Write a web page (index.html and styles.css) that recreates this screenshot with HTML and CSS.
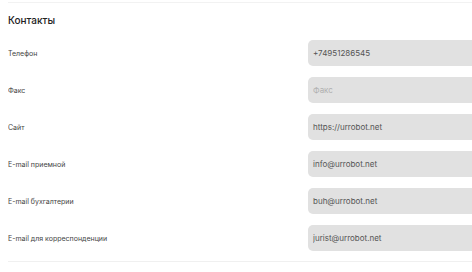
FILE: index.html
```html
<!DOCTYPE html>
<html lang="ru">
<head>
  <meta charset="UTF-8" />
  <title>Контакты</title>
  <link rel="stylesheet" href="styles.css">
</head>
<body>
  <section class="contacts">
    <h2>Контакты</h2>

    <div class="field">
      <label>Телефон</label>
      <input type="text" value="+74951286545" />
    </div>
    <div class="field">
      <label>Факс</label>
      <input type="text" placeholder="Факс" />
    </div>
    <div class="field">
      <label>Сайт</label>
      <input type="text" value="https://urrobot.net" />
    </div>
    <div class="field">
      <label>E-mail приемной</label>
      <input type="text" value="info@urrobot.net" />
    </div>
    <div class="field">
      <label>E-mail бухгалтерии</label>
      <input type="text" value="buh@urrobot.net" />
    </div>
    <div class="field">
      <label>E-mail для корреспонденции</label>
      <input type="text" value="jurist@urrobot.net" />
    </div>
  </section>
</body>
</html>
```

FILE: styles.css
```css
body {
  font-family: Inter, "Noto Sans", sans-serif;
  margin: 0;
  padding: 0;
  background-color: white;
  overflow: hidden;
}
.contacts {
  margin: 2px 0 0 8px;
  padding: 9px 0 10px;
  border-top: 1px solid #f2f2f2;
  border-bottom: 1px solid #f0f0f0;
  display: flex;
  flex-direction: column;
  gap: 11px;
  overflow: hidden;
}
.contacts h2 {
  margin: 0 0 1px;
  font-size: 10px;
  font-weight: 500;
  line-height: 16px;
  color: #222;
}
.field {
  display: flex;
  align-items: center;
  height: 26px;
}
.field label {
  width: 300px;
  flex-shrink: 0;
  font-size: 7px;
  color: #444;
}
.field input {
  width: 220px;
  height: 26px;
  box-sizing: border-box;
  flex-shrink: 0;
  padding: 0 5px;
  border: none;
  border-radius: 5px;
  background-color: #e1e1e1;
  font-family: Inter, "Noto Sans", sans-serif;
  font-size: 8px;
  color: #555;
  outline: none;
}
.field input::placeholder {
  color: #b0b0b0;
}
```
